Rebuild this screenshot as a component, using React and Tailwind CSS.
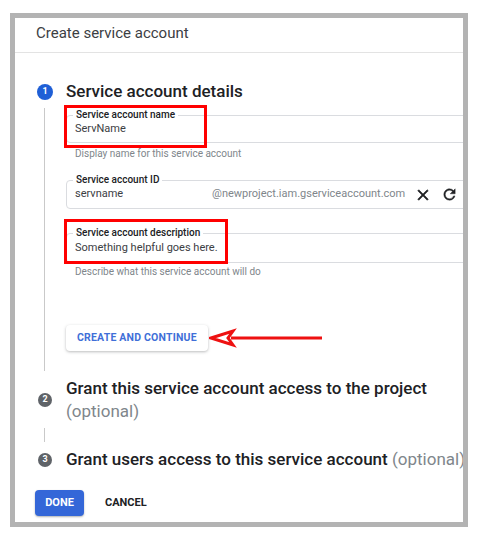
const font = { fontFamily: "Roboto, 'Noto Sans', Arial, sans-serif" };

function OutlinedField({ label, children, height, redBox }) {
    return (
        <div className={`relative w-[420px] rounded-[4px] border border-[#dadce0] ${height}`}>
            <span className="absolute left-[6px] top-[-7px] bg-white px-[3px] text-[10px] font-medium leading-[12px] text-[#202124]">
                {label}
            </span>
            <div className="flex h-full items-center pl-[8px] text-[11px] text-[#3c4043]">{children}</div>
            {redBox && <div className={`pointer-events-none absolute border-[3px] border-[#ff0000] ${redBox}`} />}
        </div>
    );
}

function StepBadge({ n, active }) {
    return (
        <div
            className={`flex shrink-0 items-center justify-center rounded-full text-[9px] font-bold text-white ${
                active ? "h-4 w-4 bg-[#1f5fd6]" : "h-[14px] w-[14px] bg-[#5f6368] mx-px"
            }`}
        >
            {n}
        </div>
    );
}

export default function App() {
    return (
        <div className="h-[541px] w-[479px] bg-white pl-[10px] pt-[13px]" style={font}>
            <div className="h-[514px] w-[458px] border-[5px] border-[#b3b3b3] bg-white">
                <div className="h-full w-full overflow-hidden">
                    <div className="flex h-[35px] items-center border-b border-[#e3e3e3] pb-[3px] pl-[21px] text-[15px] text-[#3c4043]">
                        Create service account
                    </div>

                    <div className="pl-[20px]">
                        <div className="ml-[2px] mt-[27px] flex h-[24px] items-center gap-[13px]">
                            <StepBadge n="1" active />
                            <div className="whitespace-nowrap text-[17px] font-medium text-[#202124]">Service account details</div>
                        </div>

                        <div className="ml-[9px] mt-[4px] border-l border-[#c9c9c9] pb-[20px] pl-[21px] pt-[7px]">
                            <OutlinedField
                                label="Service account name"
                                height="h-[28px]"
                                redBox="left-[-3px] top-[-11px] h-[43px] w-[143px]"
                            >
                                ServName
                            </OutlinedField>
                            <div className="mt-[5px] pl-[9px] text-[10px] leading-[12px] text-[#80868b]">
                                Display name for this service account
                            </div>

                            <div className="mt-[20px]">
                                <OutlinedField label="Service account ID" height="h-[29px]">
                                    <span className="w-[137px] shrink-0">servname</span>
                                    <span className="shrink-0 text-[#80868b]">@newproject.iam.gserviceaccount.com</span>
                                    <svg className="ml-[9px] shrink-0" width="18" height="18" viewBox="0 0 24 24" fill="#202124">
                                        <path d="M19 6.41L17.59 5 12 10.59 6.41 5 5 6.41 10.59 12 5 17.59 6.41 19 12 13.41 17.59 19 19 17.59 13.41 12z" stroke="#202124" strokeWidth="0.8" />
                                    </svg>
                                    <svg className="ml-[9px] shrink-0" width="17" height="17" viewBox="0 0 24 24" fill="#202124">
                                        <path d="M17.65 6.35A7.958 7.958 0 0012 4c-4.42 0-7.99 3.58-7.99 8s3.57 8 7.99 8c3.73 0 6.84-2.55 7.73-6h-2.08A5.99 5.99 0 0112 18c-3.31 0-6-2.69-6-6s2.69-6 6-6c1.66 0 3.14.69 4.22 1.78L13 11h7V4l-2.35 2.35z" stroke="#202124" strokeWidth="0.6" />
                                    </svg>
                                </OutlinedField>
                            </div>

                            <div className="mt-[24px]">
                                <OutlinedField
                                    label="Service account description"
                                    height="h-[30px]"
                                    redBox="left-[-3px] top-[-15px] h-[45px] w-[164px]"
                                >
                                    Something helpful goes here.
                                </OutlinedField>
                            </div>
                            <div className="mt-[3px] pl-[9px] text-[10px] leading-[12px] text-[#80868b]">
                                Describe what this service account will do
                            </div>

                            <div className="mt-[47px] flex items-center">
                                <button className="h-[26px] rounded-[4px] bg-white px-[11px] text-[10.5px] font-bold tracking-[0.2px] text-[#3f6fd8] shadow-[0_1px_3px_rgba(60,64,67,0.35)]">
                                    CREATE AND CONTINUE
                                </button>
                                <svg width="115" height="20" viewBox="0 0 115 20" className="ml-[1px]">
                                    <line x1="22" y1="10" x2="113" y2="10" stroke="#ee1111" strokeWidth="3" />
                                    <polygon points="2,10 24,3 19,10 24,17" fill="white" stroke="#ee1111" strokeWidth="3" strokeLinejoin="miter" />
                                </svg>
                            </div>
                        </div>

                        <div className="ml-[2px] mt-[6px] flex items-center gap-[13px]">
                            <StepBadge n="2" />
                            <div className="text-[17px] font-medium leading-[23px] text-[#202124]">
                                Grant this service account access to the project
                                <br />
                                <span className="font-normal text-[#80868b]">(optional)</span>
                            </div>
                        </div>

                        <div className="ml-[9px] mt-[5px] h-[14px] w-px bg-[#c9c9c9]" />

                        <div className="ml-[2px] mt-[6px] flex h-[23px] items-center gap-[13px]">
                            <StepBadge n="3" />
                            <div className="whitespace-nowrap text-[17px] font-medium leading-[23px] text-[#202124]">
                                Grant users access to this service account{" "}
                                <span className="font-normal text-[#80868b]">(optional)</span>
                            </div>
                        </div>

                        <div className="mt-[19px] flex items-center gap-[21px]">
                            <button className="h-[26px] w-[49px] rounded-[4px] bg-[#3467d8] text-[11px] font-bold text-white shadow-[0_1px_2px_rgba(60,64,67,0.4)]">
                                DONE
                            </button>
                            <button className="text-[11px] font-bold text-[#202124]">CANCEL</button>
                        </div>
                    </div>
                </div>
            </div>
        </div>
    );
}
